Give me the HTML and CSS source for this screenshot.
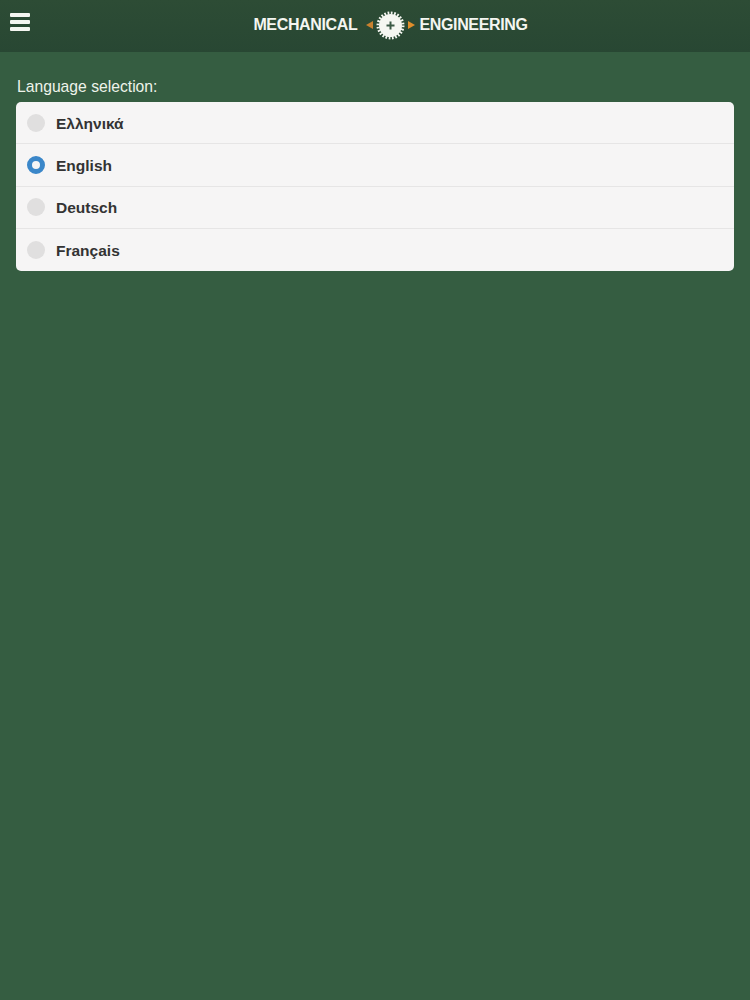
FILE: index.html
```html
<!DOCTYPE html>
<html lang="en">

<head>
    <meta charset="UTF-8">
    <meta name="viewport" content="width=device-width, initial-scale=1.0">
    <title>Language selection</title>
    <link rel="stylesheet" href="styles.css">
</head>

<body>
    <header class="topbar">
        <div class="menu">
            <span></span>
            <span></span>
            <span></span>
        </div>
        <div class="logo">
            <span class="word">MECHANICAL</span>
            <svg class="gear" width="52" height="30" viewBox="0 0 52 30">
                <polygon points="2,15 9,11 9,19" fill="#c9812f" />
                <polygon points="51,15 44,11 44,19" fill="#e08e2b" />
                <circle cx="26.5" cy="15.5" r="11.5" fill="#f6f7f2" />
                <circle cx="26.5" cy="15.5" r="12.5" fill="none" stroke="#f6f7f2" stroke-width="3" stroke-dasharray="1.7 1.57" />
                <path d="M26.5 11.5v8M22.5 15.5h8" stroke="#3c5a46" stroke-width="2" />
            </svg>
            <span class="word">ENGINEERING</span>
        </div>
    </header>

    <main class="content">
        <div class="label">Language selection:</div>
        <div class="list">
            <div class="row"><span class="radio"></span><span class="name">Ελληνικά</span></div>
            <div class="row"><span class="radio checked"></span><span class="name">English</span></div>
            <div class="row"><span class="radio"></span><span class="name">Deutsch</span></div>
            <div class="row"><span class="radio"></span><span class="name">Français</span></div>
        </div>
    </main>
</body>

</html>
```

FILE: styles.css
```css
html {
    height: 100%;
}

body {
    margin: 0;
    min-height: 100%;
    height: 1000px;
    background-color: #355d41;
    font-family: "Liberation Sans", Arial, sans-serif;
    overflow: hidden;
}

.topbar {
    position: relative;
    height: 52px;
    display: flex;
    justify-content: center;
    align-items: center;
    background: linear-gradient(#2d4c35, #284733);
}

.menu {
    position: absolute;
    left: 10px;
    top: 13px;
    width: 20px;
    display: flex;
    flex-direction: column;
    gap: 3px;
}

.menu span {
    height: 4px;
    background-color: #f4f6f1;
    border-radius: 1px;
}

.logo {
    display: flex;
    align-items: center;
    margin-left: 31px;
    margin-top: -3px;
}

.word {
    color: #f4f6f1;
    font-size: 16px;
    font-weight: bold;
    letter-spacing: -0.35px;
}

.gear {
    margin: 0 3px 0 7px;
}

.content {
    padding: 26px 16px 0;
}

.label {
    color: #eef3ea;
    font-size: 15.7px;
    line-height: 18px;
    padding-left: 1px;
    margin-bottom: 6px;
}

.list {
    background-color: #f6f5f5;
    border-radius: 5px;
    overflow: hidden;
}

.row {
    height: 42.25px;
    box-sizing: border-box;
    display: flex;
    align-items: center;
    gap: 11px;
    padding-left: 11px;
    border-bottom: 1px solid #e6e5e5;
}

.row:last-child {
    border-bottom: none;
}

.radio {
    width: 18px;
    height: 18px;
    box-sizing: border-box;
    border-radius: 50%;
    background-color: #e0dfdf;
}

.radio.checked {
    background-color: #f6f5f5;
    border: 5px solid #3b87c9;
}

.name {
    color: #333333;
    font-size: 15.5px;
    font-weight: bold;
    margin-top: 2px;
}
```
